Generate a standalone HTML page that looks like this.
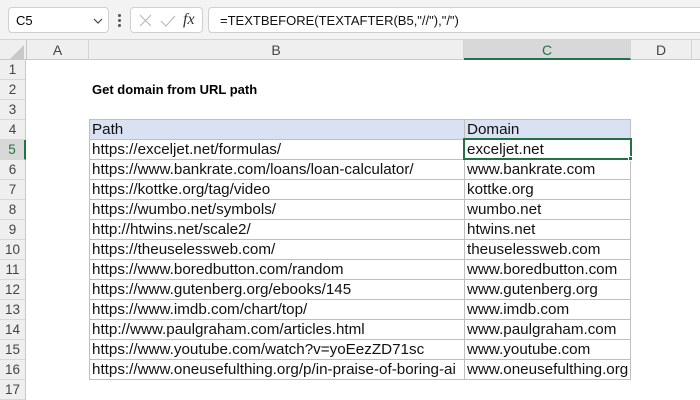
<!DOCTYPE html>
<html><head><style>
*{margin:0;padding:0;box-sizing:border-box}
body{width:700px;height:400px;background:#fff;font-family:"Liberation Sans",sans-serif;position:relative;overflow:hidden}
.abs{position:absolute}
.bar{left:0;top:0;width:700px;height:40px;background:#f3f3f3;border-bottom:1px solid #d4d4d4}
.box{background:#fff;border:1px solid #d0d0d0;border-radius:4px;top:7px;height:26px}
.hdr{left:0;top:40px;width:700px;height:20px;background:#efefef;border-bottom:1px solid #c8c8c8}
.ch{top:40px;height:20px;font-size:14px;color:#444;text-align:center;line-height:20px;border-right:1px solid #d4d4d4}
.rh{left:0;width:26px;height:20px;background:#efefef;border-bottom:1px solid #d8d8d8;border-right:1px solid #c8c8c8;font-size:13.5px;color:#444;text-align:center;line-height:20px}
.c{height:20px;font-size:15.2px;line-height:20px;padding-left:2px;color:#111;white-space:nowrap;overflow:hidden;border-bottom:1px solid #bfbfbf;border-right:1px solid #bfbfbf}
</style></head><body>
<div class="abs bar"></div>
<div class="abs box" style="left:8px;width:101px"><span class="abs" style="left:7px;top:5px;font-size:13px">C5</span>
<svg class="abs" style="left:84px;top:9px" width="10" height="8"><path d="M1 2 L5 6 L9 2" stroke="#444" fill="none" stroke-width="1.2"/></svg></div>
<div class="abs" style="left:118px;top:14px;width:3px;height:3px;background:#555;border-radius:50%"></div>
<div class="abs" style="left:118px;top:19px;width:3px;height:3px;background:#555;border-radius:50%"></div>
<div class="abs" style="left:118px;top:24px;width:3px;height:3px;background:#555;border-radius:50%"></div>
<div class="abs box" style="left:130px;width:73px">
<svg class="abs" style="left:8px;top:6px" width="60" height="14"><path d="M1 1 L12 12 M12 1 L1 12" stroke="#bbb" stroke-width="1.2"/><path d="M22 7 L27 12 L36 2" stroke="#bbb" fill="none" stroke-width="1.2"/></svg>
<span class="abs" style="left:52px;top:3px;font-family:'Liberation Serif',serif;font-style:italic;font-size:16px;color:#333">fx</span></div>
<div class="abs box" style="left:208px;width:500px"><span class="abs" style="left:11px;top:5px;font-size:13px;color:#111">=TEXTBEFORE(TEXTAFTER(B5,"//"),"/")</span></div>
<div class="abs hdr"></div>
<svg class="abs" style="left:10px;top:45px" width="14" height="14"><path d="M14 0 L14 14 L0 14Z" fill="#c8c8c8"/></svg>
<div class="abs ch" style="left:26px;width:63px;border-left:1px solid #c8c8c8">A</div>
<div class="abs ch" style="left:89px;width:375px">B</div>
<div class="abs ch" style="left:464px;width:167px;background:#d8d8d8;color:#217346;border-bottom:2px solid #217346">C</div>
<div class="abs ch" style="left:631px;width:61px">D</div>
<div class="abs rh" style="top:60px">1</div>
<div class="abs rh" style="top:80px">2</div>
<div class="abs rh" style="top:100px">3</div>
<div class="abs rh" style="top:120px">4</div>
<div class="abs rh" style="top:140px;background:#d8d8d8;color:#217346;border-right:2px solid #217346">5</div>
<div class="abs rh" style="top:160px">6</div>
<div class="abs rh" style="top:180px">7</div>
<div class="abs rh" style="top:200px">8</div>
<div class="abs rh" style="top:220px">9</div>
<div class="abs rh" style="top:240px">10</div>
<div class="abs rh" style="top:260px">11</div>
<div class="abs rh" style="top:280px">12</div>
<div class="abs rh" style="top:300px">13</div>
<div class="abs rh" style="top:320px">14</div>
<div class="abs rh" style="top:340px">15</div>
<div class="abs rh" style="top:360px">16</div>
<div class="abs rh" style="top:380px">17</div>
<div class="abs" style="left:92px;top:82px;font-size:13px;font-weight:bold">Get domain from URL path</div>
<div class="abs" style="left:89px;top:119px;width:542px;border-top:1px solid #bfbfbf;border-left:1px solid #bfbfbf">
<div style="display:flex;background:#d9e1f2"><div class="c" style="width:375px">Path</div><div class="c" style="width:166px">Domain</div></div>
<div style="display:flex"><div class="c" style="width:375px">https://exceljet.net/formulas/</div><div class="c" style="width:166px">exceljet.net</div></div>
<div style="display:flex"><div class="c" style="width:375px">https://www.bankrate.com/loans/loan-calculator/</div><div class="c" style="width:166px">www.bankrate.com</div></div>
<div style="display:flex"><div class="c" style="width:375px">https://kottke.org/tag/video</div><div class="c" style="width:166px">kottke.org</div></div>
<div style="display:flex"><div class="c" style="width:375px">https://wumbo.net/symbols/</div><div class="c" style="width:166px">wumbo.net</div></div>
<div style="display:flex"><div class="c" style="width:375px">http://htwins.net/scale2/</div><div class="c" style="width:166px">htwins.net</div></div>
<div style="display:flex"><div class="c" style="width:375px">https://theuselessweb.com/</div><div class="c" style="width:166px">theuselessweb.com</div></div>
<div style="display:flex"><div class="c" style="width:375px">https://www.boredbutton.com/random</div><div class="c" style="width:166px">www.boredbutton.com</div></div>
<div style="display:flex"><div class="c" style="width:375px">https://www.gutenberg.org/ebooks/145</div><div class="c" style="width:166px">www.gutenberg.org</div></div>
<div style="display:flex"><div class="c" style="width:375px">https://www.imdb.com/chart/top/</div><div class="c" style="width:166px">www.imdb.com</div></div>
<div style="display:flex"><div class="c" style="width:375px">http://www.paulgraham.com/articles.html</div><div class="c" style="width:166px">www.paulgraham.com</div></div>
<div style="display:flex"><div class="c" style="width:375px">https://www.youtube.com/watch?v=yoEezZD71sc</div><div class="c" style="width:166px">www.youtube.com</div></div>
<div style="display:flex"><div class="c" style="width:375px">https://www.oneusefulthing.org/p/in-praise-of-boring-ai</div><div class="c" style="width:166px">www.oneusefulthing.org</div></div>
</div>
<div class="abs" style="left:463px;top:138px;width:169px;height:22px;border:2px solid #217346"></div>
<div class="abs" style="left:628px;top:156px;width:5px;height:5px;background:#217346;border:1px solid #fff"></div>
</body></html>
